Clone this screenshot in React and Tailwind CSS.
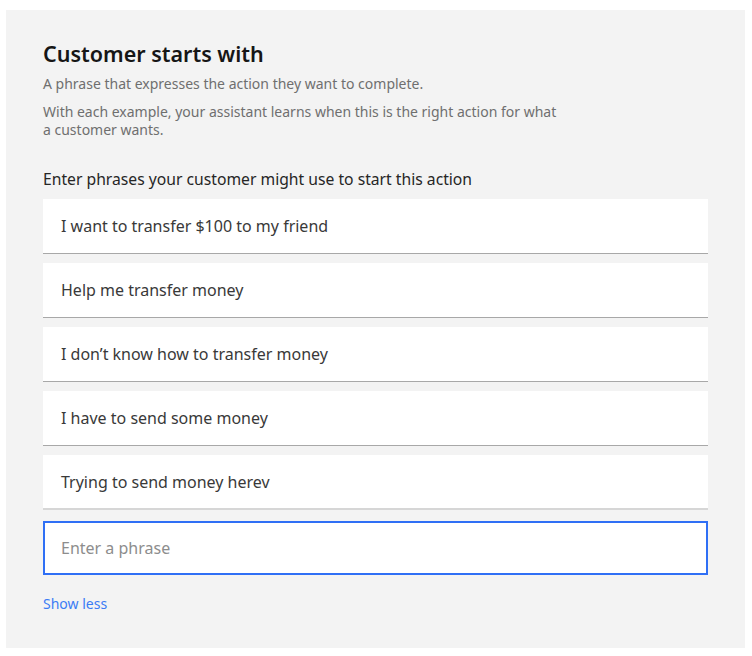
import React from 'react';

const phrases = [
  'I want to transfer $100 to my friend',
  'Help me transfer money',
  'I don\u2019t know how to transfer money',
  'I have to send some money',
  'Trying to send money herev',
];

const App = () => {
  return (
    <div className="min-h-[656px] bg-white pt-[10px] pl-[6px]" style={{ fontFamily: '"Noto Sans", "Open Sans", sans-serif' }}>
      <div className="w-[739px] h-[638px] bg-[#f3f3f3] pt-[30px] pl-[37px] pr-[37px]">
        <h1 className="text-[21.5px] leading-[28px] font-semibold text-[#161616]">Customer starts with</h1>
        <p className="mt-[7px] text-[14px] leading-[18px] text-[#6f6f6f]">
          A phrase that expresses the action they want to complete.
        </p>
        <p className="mt-[10px] w-[514px] text-[14px] leading-[18px] text-[#6f6f6f]">
          With each example, your assistant learns when this is the right action for what a customer wants.
        </p>

        <label className="block mt-[29px] text-[15.7px] leading-[22px] text-[#262626]">
          Enter phrases your customer might use to start this action
        </label>

        {/* Phrase list */}
        <div className="mt-[9px] flex flex-col gap-[9px]">
          {phrases.map((p, i) => (
            <div
              key={i}
              className={`h-[55px] bg-white flex items-center pl-[18px] text-[16px] text-[#393939] border-b ${
                i === phrases.length - 1 ? 'border-b-2 border-[#d6d6d6]' : 'border-[#a8a8a8]'
              }`}
            >
              {p}
            </div>
          ))}
        </div>

        <input
          type="text"
          placeholder="Enter a phrase"
          className="mt-[11px] block w-full h-[54px] bg-white border-2 border-[#2f6ff5] pl-[16px] text-[16px] text-[#393939] placeholder:text-[#8d8d8d] outline-none"
        />

        <button className="mt-[20px] block text-[14px] leading-[18px] text-[#3b7cf5]">Show less</button>
      </div>
    </div>
  );
};

export default App;
